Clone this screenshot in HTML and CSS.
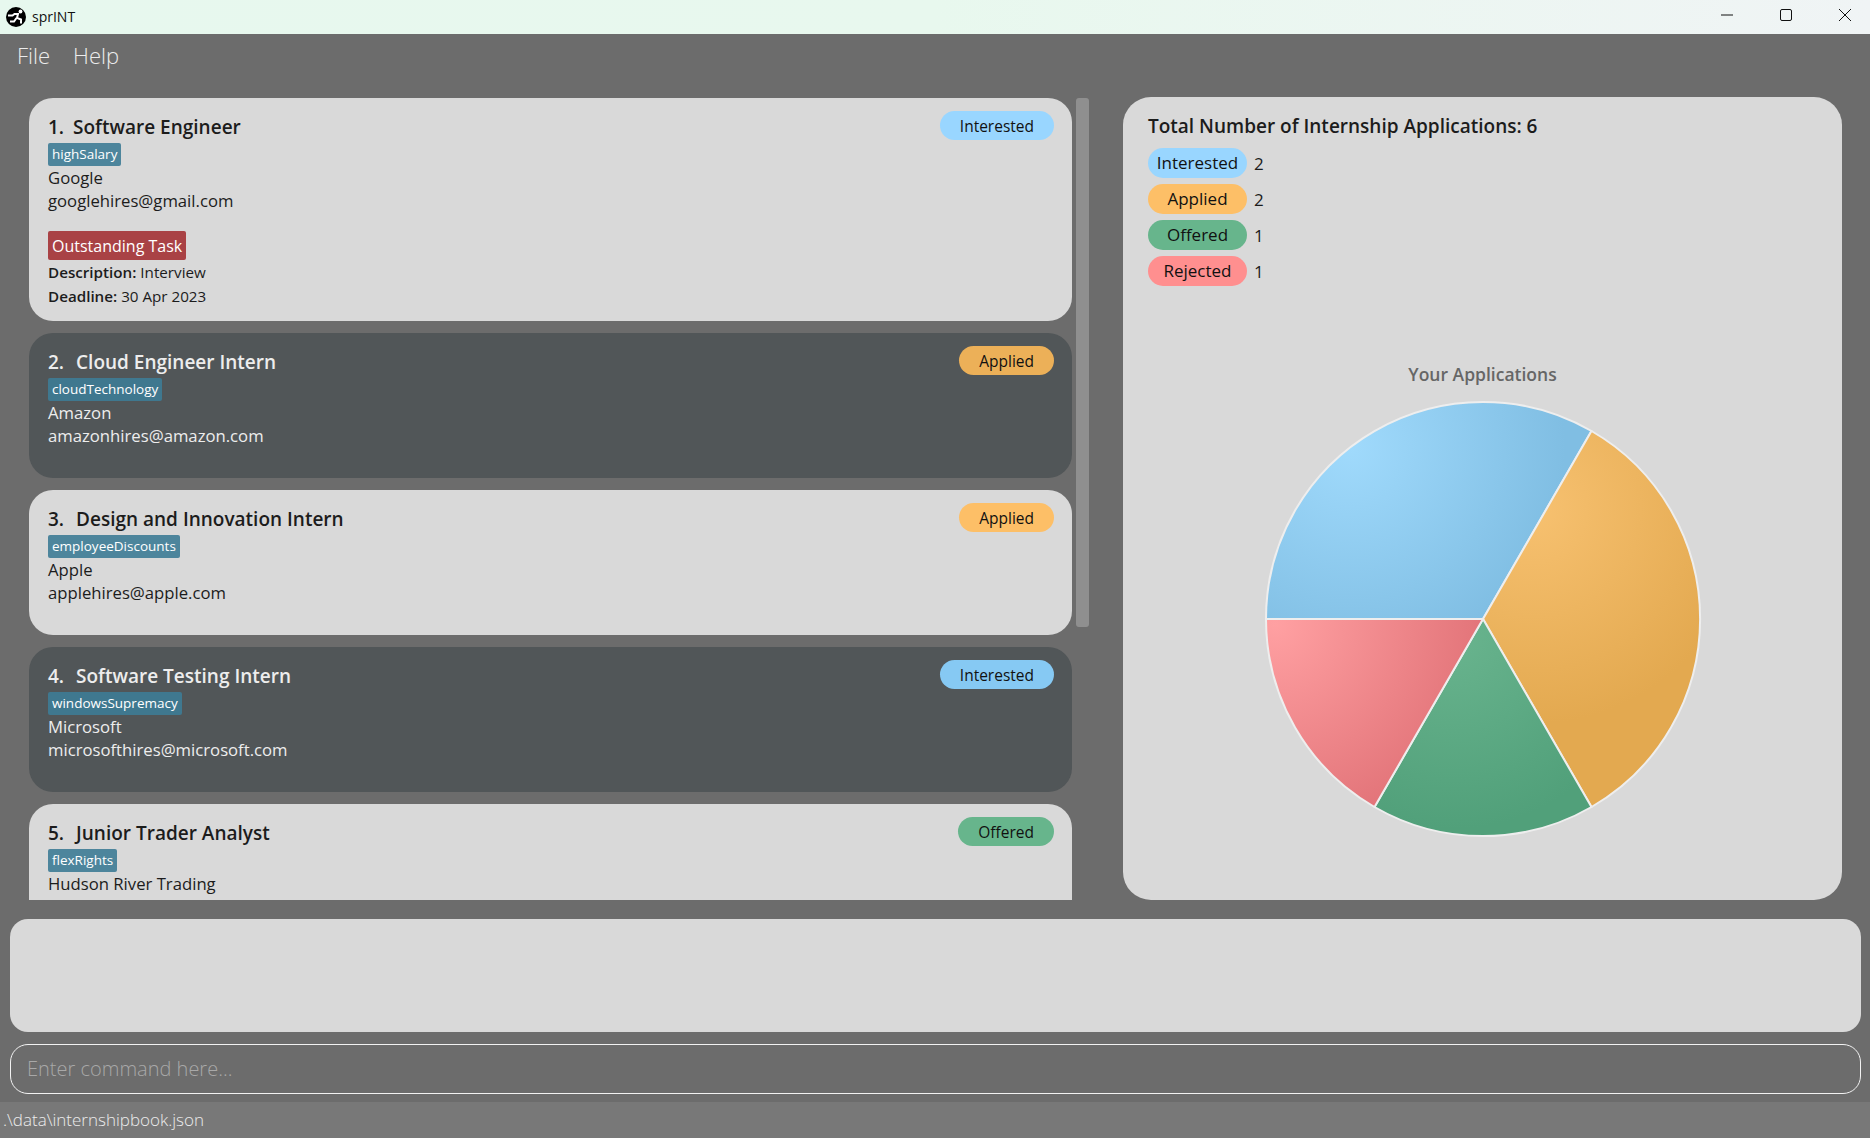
FILE: index.html
```html
<!DOCTYPE html>
<html lang="en">
<head>
    <meta charset="UTF-8">
    <meta name="viewport" content="width=device-width, initial-scale=1.0">
    <title>sprINT</title>
    <link rel="stylesheet" href="styles.css">
</head>
<body>
    <!-- Window title bar -->
    <header class="titlebar">
        <svg class="app-logo" viewBox="0 0 20 20" width="20" height="20">
            <circle cx="10" cy="10" r="10" fill="#000"/>
            <circle cx="14.5" cy="4.5" r="1.9" fill="#fff"/>
            <path d="M2 8.5h4.5l2-1.5h3.5l-1 4 4 1.5v4M10.5 11l-2.5 3.5h-4" stroke="#fff" stroke-width="2" fill="none"/>
        </svg>
        <span class="app-name">sprINT</span>
        <div class="window-controls">
            <svg viewBox="0 0 12 12" width="12" height="12"><path d="M0 6h12" stroke="#111" fill="none"/></svg>
            <svg viewBox="0 0 12 12" width="12" height="12"><rect x=".5" y=".5" width="11" height="11" rx="1.5" stroke="#111" fill="none"/></svg>
            <svg viewBox="0 0 12 12" width="12" height="12"><path d="M0 0l12 12M12 0L0 12" stroke="#111" fill="none"/></svg>
        </div>
    </header>

    <nav class="menubar">
        <span>File</span>
        <span>Help</span>
    </nav>

    <main class="content">
        <section class="list-pane">
            <div class="list-clip">
                <article class="card card-light card-tall">
                    <div class="card-head">
                        <h3><span class="num num-one">1.</span>Software Engineer</h3>
                        <span class="chip chip-interested">Interested</span>
                    </div>
                    <span class="tag">highSalary</span>
                    <p class="line">Google</p>
                    <p class="line">googlehires@gmail.com</p>
                    <span class="task-flag">Outstanding Task</span>
                    <p class="task"><b>Description:</b> Interview</p>
                    <p class="task"><b>Deadline:</b> 30 Apr 2023</p>
                </article>
                <article class="card card-dark">
                    <div class="card-head">
                        <h3><span class="num">2.</span>Cloud Engineer Intern</h3>
                        <span class="chip chip-applied">Applied</span>
                    </div>
                    <span class="tag">cloudTechnology</span>
                    <p class="line">Amazon</p>
                    <p class="line">amazonhires@amazon.com</p>
                </article>
                <article class="card card-light">
                    <div class="card-head">
                        <h3><span class="num">3.</span>Design and Innovation Intern</h3>
                        <span class="chip chip-applied">Applied</span>
                    </div>
                    <span class="tag">employeeDiscounts</span>
                    <p class="line">Apple</p>
                    <p class="line">applehires@apple.com</p>
                </article>
                <article class="card card-dark">
                    <div class="card-head">
                        <h3><span class="num">4.</span>Software Testing Intern</h3>
                        <span class="chip chip-interested">Interested</span>
                    </div>
                    <span class="tag">windowsSupremacy</span>
                    <p class="line">Microsoft</p>
                    <p class="line">microsofthires@microsoft.com</p>
                </article>
                <article class="card card-light">
                    <div class="card-head">
                        <h3><span class="num">5.</span>Junior Trader Analyst</h3>
                        <span class="chip chip-offered">Offered</span>
                    </div>
                    <span class="tag">flexRights</span>
                    <p class="line">Hudson River Trading</p>
                    <p class="line">hrthires@hrt.com</p>
                </article>
            </div>
            <div class="scroll-track"><div class="scroll-thumb"></div></div>
        </section>

        <aside class="stats-panel">
            <h2>Total Number of Internship Applications: 6</h2>
            <ul class="legend">
                <li><span class="pill chip-interested">Interested</span>2</li>
                <li><span class="pill chip-applied">Applied</span>2</li>
                <li><span class="pill chip-offered">Offered</span>1</li>
                <li><span class="pill chip-rejected">Rejected</span>1</li>
            </ul>
            <h4 class="chart-title">Your Applications</h4>
            <svg class="pie" viewBox="0 0 440 440" width="440" height="440">
                <defs>
                    <radialGradient id="g-blue" gradientUnits="userSpaceOnUse" cx="87" cy="48" r="215">
                        <stop offset="0" stop-color="#a0dafc"/><stop offset="1" stop-color="#80bee3"/>
                    </radialGradient>
                    <radialGradient id="g-orange" gradientUnits="userSpaceOnUse" cx="270" cy="110" r="215">
                        <stop offset="0" stop-color="#f7c170"/><stop offset="1" stop-color="#e3a950"/>
                    </radialGradient>
                    <radialGradient id="g-green" gradientUnits="userSpaceOnUse" cx="190" cy="235" r="195">
                        <stop offset="0" stop-color="#69b48e"/><stop offset="1" stop-color="#51a07a"/>
                    </radialGradient>
                    <radialGradient id="g-red" gradientUnits="userSpaceOnUse" cx="12" cy="225" r="205">
                        <stop offset="0" stop-color="#ffa0a2"/><stop offset="1" stop-color="#e3757a"/>
                    </radialGradient>
                </defs>
                <g class="slices">
                    <path d="M220 220L3 220A217 217 0 0 1 328.5 32Z" fill="url(#g-blue)"/>
                    <path d="M220 220L328.5 32A217 217 0 0 1 328.5 408Z" fill="url(#g-orange)"/>
                    <path d="M220 220L328.5 408A217 217 0 0 1 111.5 408Z" fill="url(#g-green)"/>
                    <path d="M220 220L111.5 408A217 217 0 0 1 3 220Z" fill="url(#g-red)"/>
                </g>
            </svg>
        </aside>
    </main>

    <section class="result-box"></section>
    <div class="command-box">Enter command here...</div>
    <footer class="statusbar">.\data\internshipbook.json</footer>
</body>
</html>
```

FILE: styles.css
```css
* {
    box-sizing: border-box;
}
body {
    margin: 0;
    height: 1138px;
    overflow: hidden;
    display: flex;
    flex-direction: column;
    background-color: #6c6c6c;
    font-family: "Open Sans", "Noto Sans", sans-serif;
    color: #1c1c1c;
}
h2, h3, h4, p, ul {
    margin: 0;
    padding: 0;
}

/* title bar */
.titlebar {
    height: 34px;
    flex: none;
    display: flex;
    align-items: center;
    padding-left: 6px;
    background: linear-gradient(90deg, #e7f8ee 0%, #e8f8ee 50%, #f0f4f5 100%);
    color: #111;
    font-size: 14px;
}
.app-logo {
    margin-right: 6px;
}
.app-name {
    margin-top: -2px;
}
.window-controls {
    margin-left: auto;
    margin-top: -4px;
    display: flex;
    gap: 47px;
    padding-right: 19px;
}

.menubar {
    height: 42px;
    margin-bottom: 2px;
    flex: none;
    display: flex;
    align-items: center;
    gap: 23px;
    padding-left: 17px;
    font-size: 22px;
    font-weight: 300;
    color: #ececec;
}

/* main area */
.content {
    height: 822px;
    flex: none;
    display: flex;
    padding: 19px 28px 0 29px;
}
.list-pane {
    width: 1060px;
    height: 803px;
    display: flex;
}
.list-clip {
    width: 1043px;
    height: 803px;
    overflow: hidden;
    display: flex;
    flex-direction: column;
    gap: 12.5px;
    padding-top: 1px;
}
.scroll-track {
    width: 13px;
    margin-left: 4px;
    padding-top: 1px;
}
.scroll-thumb {
    height: 529px;
    background-color: #8f8f8f;
    border-radius: 3px;
}

.card {
    flex: none;
    height: 144.5px;
    padding: 15px 18px 0 19px;
    border-radius: 24px;
    display: flex;
    flex-direction: column;
    align-items: flex-start;
    font-size: 16.7px;
}
.card-tall {
    height: 222.7px;
}
.card-light {
    background-color: #d9d9d9;
}
.card-dark {
    background-color: #515658;
    color: #ededed;
}
.card-head {
    width: 100%;
    display: flex;
    justify-content: space-between;
    align-items: flex-start;
    height: 28px;
}
.card-head h3 {
    font-size: 19px;
    font-weight: 600;
    line-height: 28px;
}
.num {
    margin-right: 12px;
}
.num-one {
    margin-right: 9px;
}
.chip {
    padding: 0 20px;
    height: 29px;
    line-height: 31px;
    border-radius: 15px;
    font-size: 15.5px;
    color: #111;
    margin-top: -2px;
}
.tag {
    margin-top: 2px;
    padding: 0 4px;
    height: 23px;
    line-height: 22px;
    background-color: #4d859c;
    color: #fff;
    font-size: 13.5px;
    border-radius: 2px;
}
.card-dark .tag {
    background-color: #3f788f;
}
.line {
    line-height: 23px;
}
.task-flag {
    margin-top: 19px;
    padding: 0 4px;
    height: 29px;
    line-height: 30px;
    background-color: #a94245;
    color: #fff;
    font-size: 16px;
    border-radius: 2px;
}
.task {
    font-size: 15.2px;
    line-height: 24px;
}
.task b {
    font-weight: 600;
}

.chip-interested {
    background-color: #99d6ff;
}
.chip-applied {
    background-color: #fdbf67;
}
.chip-offered {
    background-color: #67b58c;
}
.chip-rejected {
    background-color: #ff8f8f;
}
.card-dark .chip-interested {
    background-color: #86c9f3;
}
.card-dark .chip-applied {
    background-color: #ecb058;
}

/* right hand stats */
.stats-panel {
    width: 719px;
    height: 803px;
    margin-left: 34px;
    padding: 15px 25px 0;
    background-color: #d9d9d9;
    border-radius: 28px;
    display: flex;
    flex-direction: column;
}
.stats-panel h2 {
    font-size: 19px;
    font-weight: 600;
    line-height: 28px;
}
.legend {
    list-style: none;
    margin-top: 8px;
    display: flex;
    flex-direction: column;
    gap: 6px;
    font-size: 17px;
}
.legend li {
    display: flex;
    align-items: center;
    gap: 7px;
    height: 30px;
}
.pill {
    width: 99px;
    height: 30px;
    line-height: 29px;
    text-align: center;
    border-radius: 15px;
    color: #111;
}
.chart-title {
    margin-top: 75px;
    text-align: center;
    font-size: 17.5px;
    font-weight: 600;
    color: #666;
    line-height: 26px;
}
.pie {
    align-self: center;
    margin-top: 12px;
}
.slices path {
    stroke: #eeeeee;
    stroke-width: 2;
    stroke-linejoin: round;
}

/* bottom */
.result-box {
    height: 113px;
    flex: none;
    margin: 19px 9px 0 10px;
    background-color: #d9d9d9;
    border-radius: 18px;
}
.command-box {
    height: 50px;
    flex: none;
    margin: 12px 9px 0 10px;
    padding-left: 16px;
    border: 1.5px solid #f2f2f2;
    border-radius: 18px;
    line-height: 48px;
    font-size: 20px;
    font-weight: 300;
    color: #a8a8a8;
}
.statusbar {
    height: 36px;
    flex: none;
    margin-top: 8px;
    padding-left: 3px;
    background-color: #787878;
    color: #ececec;
    font-size: 17px;
    font-weight: 300;
    line-height: 36px;
}
```
